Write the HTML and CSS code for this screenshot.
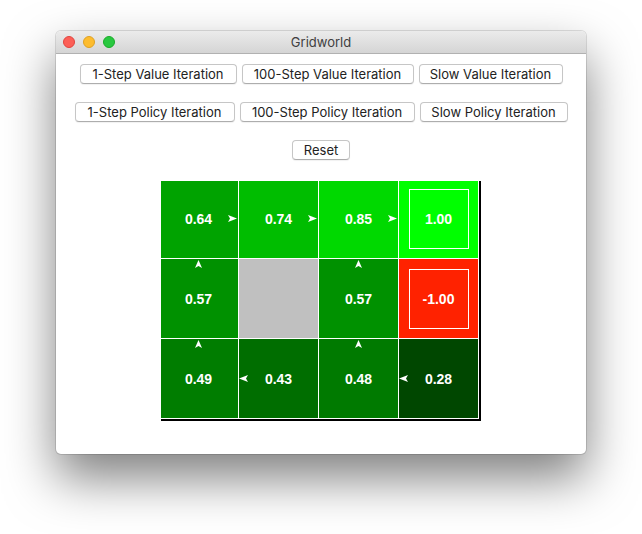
FILE: index.html
```html
<!DOCTYPE html>
<html>
<head>
<meta charset="utf-8">
<title>Gridworld</title>
<link rel="stylesheet" href="styles.css">
</head>
<body>
<div class="window">
  <div class="titlebar">
    <div class="lights">
      <span class="light red"></span>
      <span class="light yellow"></span>
      <span class="light green"></span>
    </div>
    <div class="title">Gridworld</div>
  </div>
  <div class="content">
    <div class="row">
      <button class="btn b1">1-Step Value Iteration</button>
      <button class="btn b2">100-Step Value Iteration</button>
      <button class="btn b3">Slow Value Iteration</button>
    </div>
    <div class="row">
      <button class="btn b4">1-Step Policy Iteration</button>
      <button class="btn b5">100-Step Policy Iteration</button>
      <button class="btn b6">Slow Policy Iteration</button>
    </div>
    <div class="row">
      <button class="btn b7">Reset</button>
    </div>
    <div class="board">
      <div class="grid">
        <div class="cell" style="background:rgb(0,163,0)">0.64<svg class="arrow right" viewBox="0 0 9 7"><polygon points="0,0 9,3.5 0,7 2,3.5"/></svg></div>
        <div class="cell" style="background:rgb(0,189,0)">0.74<svg class="arrow right" viewBox="0 0 9 7"><polygon points="0,0 9,3.5 0,7 2,3.5"/></svg></div>
        <div class="cell" style="background:rgb(0,217,0)">0.85<svg class="arrow right" viewBox="0 0 9 7"><polygon points="0,0 9,3.5 0,7 2,3.5"/></svg></div>
        <div class="cell" style="background:rgb(0,255,0)"><div class="terminal">1.00</div></div>

        <div class="cell" style="background:rgb(0,145,0)">0.57<svg class="arrow up" viewBox="0 0 7 8"><polygon points="0,8 3.5,0 7,8 3.5,6"/></svg></div>
        <div class="cell wall"></div>
        <div class="cell" style="background:rgb(0,145,0)">0.57<svg class="arrow up" viewBox="0 0 7 8"><polygon points="0,8 3.5,0 7,8 3.5,6"/></svg></div>
        <div class="cell" style="background:rgb(255,34,0)"><div class="terminal">-1.00</div></div>

        <div class="cell" style="background:rgb(0,125,0)">0.49<svg class="arrow up" viewBox="0 0 7 8"><polygon points="0,8 3.5,0 7,8 3.5,6"/></svg></div>
        <div class="cell" style="background:rgb(0,110,0)">0.43<svg class="arrow left" viewBox="0 0 9 7"><polygon points="9,0 0,3.5 9,7 7,3.5"/></svg></div>
        <div class="cell" style="background:rgb(0,122,0)">0.48<svg class="arrow up" viewBox="0 0 7 8"><polygon points="0,8 3.5,0 7,8 3.5,6"/></svg></div>
        <div class="cell" style="background:rgb(0,71,0)">0.28<svg class="arrow left" viewBox="0 0 9 7"><polygon points="9,0 0,3.5 9,7 7,3.5"/></svg></div>
      </div>
    </div>
  </div>
</div>
</body>
</html>
```
FILE: styles.css
```css
html, body {
  margin: 0;
  padding: 0;
  background: #ffffff;
}

body {
  font-family: "Inter", "Liberation Sans", Arial, sans-serif;
  width: 642px;
  height: 534px;
  overflow: hidden;
}

.window {
  width: 530px;
  height: 423px;
  margin: 31px 0 0 56px;
  background: #ffffff;
  border-radius: 5px;
  box-shadow: 0 0 0 1px rgba(0, 0, 0, 0.12), 0 24px 50px rgba(0, 0, 0, 0.5);
  overflow: hidden;
}

.titlebar {
  height: 22px;
  display: flex;
  align-items: center;
  background: linear-gradient(#ebebeb, #d5d5d5);
  border-bottom: 1px solid #b1b1b1;
  position: relative;
}

.lights {
  display: flex;
  gap: 8px;
  padding-left: 7px;
}

.light {
  width: 12px;
  height: 12px;
  border-radius: 50%;
  box-sizing: border-box;
}

.light.red { background: #fc5f57; border: 1px solid #e0443e; }
.light.yellow { background: #fdbc2e; border: 1px solid #dea123; }
.light.green { background: #29c840; border: 1px solid #1aab29; }

.title {
  position: absolute;
  left: 0;
  right: 0;
  top: 0;
  line-height: 22px;
  text-align: center;
  font-size: 13px;
  color: #404040;
  pointer-events: none;
}

.content {
  display: flex;
  flex-direction: column;
  align-items: center;
  padding-top: 10px;
}

.row {
  display: flex;
  justify-content: center;
  gap: 5px;
  margin-bottom: 18px;
}

.btn {
  height: 20px;
  padding: 0;
  font-family: "Inter", "Liberation Sans", Arial, sans-serif;
  font-size: 13px;
  color: #222222;
  background: #ffffff;
  border: 1px solid #c6c6c6;
  border-bottom-color: #adadad;
  border-radius: 4px;
  box-shadow: 0 1px 1px rgba(0, 0, 0, 0.06);
  line-height: 18px;
}

.b1 { width: 157px; }
.b2 { width: 172px; }
.b3 { width: 144px; }
.b4 { width: 160px; }
.b5 { width: 175px; }
.b6 { width: 148px; }
.b7 { width: 58px; }

.board {
  width: 318px;
  height: 238px;
  overflow: hidden;
  border-right: 2px solid #000000;
  border-bottom: 2px solid #000000;
  margin-top: 3px;
}

.grid {
  margin: -3px 0 0 -3px;
  display: grid;
  grid-template-columns: repeat(4, 79px);
  grid-auto-rows: 79px;
  gap: 1px;
  padding: 1px;
  background: #ffffff;
  width: max-content;
}

.cell {
  position: relative;
  display: flex;
  align-items: center;
  justify-content: center;
  color: #ffffff;
  font-family: "Liberation Sans", Arial, sans-serif;
  font-size: 14px;
  font-weight: bold;
}

.cell.wall {
  background: #c0c0c0;
}

.terminal {
  width: 60px;
  height: 60px;
  box-sizing: border-box;
  border: 1px solid #ffffff;
  display: flex;
  align-items: center;
  justify-content: center;
}

.arrow {
  position: absolute;
  fill: #ffffff;
}

.arrow.right {
  width: 9px;
  height: 7px;
  right: 1px;
  top: 36px;
}

.arrow.left {
  width: 9px;
  height: 7px;
  left: 0;
  top: 36px;
}

.arrow.up {
  width: 7px;
  height: 8px;
  top: 1px;
  left: 36px;
}
```
